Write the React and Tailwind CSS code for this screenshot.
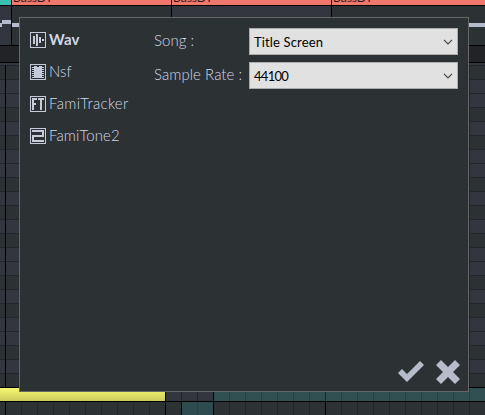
import React from "react";

// Piano-roll rows from top to bottom: L = white key, D = black key.
const ROWS = "DLLDLDLLDLDLDLLDLDLLDLD".split("");

const FORMATS = [
  { name: "Wav", selected: true, spacing: "tracking-[0.1px]" },
  { name: "Nsf", spacing: "tracking-normal" },
  { name: "FamiTracker", spacing: "tracking-[0.32px]" },
  { name: "FamiTone2", spacing: "tracking-[0.1px]" },
];

const FIELDS = [
  { label: "Song :", value: "Title Screen", spacing: "tracking-[0.15px]" },
  { label: "Sample Rate :", value: "44100", spacing: "tracking-[-0.7px]" },
];

function FormatIcon({ name }) {
  return (
    <svg width="16" height="16" viewBox="0 0 16 16" fill="#c6cbdb" shapeRendering="crispEdges" className="shrink-0">
      <path fillRule="evenodd" d="M0 0H16V16H0ZM1 1V15H15V1Z" />
      {name === "Wav" && <path d="M3 4h2v8h-2ZM6 2h2v12h-2ZM9 5h2v6h-2ZM12 7h2v2h-2Z" />}
      {name === "Nsf" && (
        <path d="M4 2H7V3H9V2H12V14H4ZM2 3h2v1h-2ZM2 5h2v1h-2ZM2 7h2v1h-2ZM2 9h2v1h-2ZM2 11h2v1h-2ZM2 13h2v1h-2ZM12 3h2v1h-2ZM12 5h2v1h-2ZM12 7h2v1h-2ZM12 9h2v1h-2ZM12 11h2v1h-2ZM12 13h2v1h-2Z" />
      )}
      {name === "FamiTracker" && <path d="M2 2H7V4H4V7H6V9H4V14H2ZM8 2H14V4H12V14H10V4H8Z" />}
      {name === "FamiTone2" && <path d="M2 2H14V9H4V12H14V14H2V7H12V4H2Z" />}
    </svg>
  );
}

function Select({ value, spacing }) {
  return (
    <div className={`flex h-[27px] w-[209px] items-center justify-between border border-[#acacac] bg-[#e1e1e1] pl-1 pr-1 pt-[2px] text-[13px] text-black ${spacing}`}>
      <span>{value}</span>
      <svg width="10" height="6" viewBox="0 0 10 6" fill="none" stroke="#444" strokeWidth="1.2" className="mb-[2px]">
        <path d="M1 0.8L5 4.8L9 0.8" />
      </svg>
    </div>
  );
}

function Header() {
  return (
    <div className="flex h-[6px] overflow-hidden border-b border-black text-[12px] leading-[12px] text-[#301a1a]">
      <div className="w-[11px] bg-[#38c0b2]" />
      {["w-[160px]", "w-[160px]", "w-[154px]"].map((w, i) => (
        <div key={i} className={`${w} shrink-0 border-l border-black bg-[#ef776c] pl-px`}>
          <span className="-mt-[8px] block">BassDT</span>
        </div>
      ))}
    </div>
  );
}

function Envelope() {
  return (
    <div className="flex h-10 border-b border-black">
      <div className="flex w-[11px] bg-[#33363f]">
        <div className="mt-[17px] h-1 w-[2px] bg-[#b4bccc]" />
        <div className="mt-[14px] h-1 w-[9px] bg-[#b4bccc]" />
      </div>
      <div className="w-[160px] border-l border-black bg-[#2c3134] pt-[17px]">
        <div className="h-1 bg-[#b4bccc]" />
      </div>
      <div className="w-[160px] border-l border-black bg-[#33363f]" />
      <div className="flex-1 border-l border-black bg-[#2c3134] pt-[17px]">
        <div className="h-1 bg-[#b4bccc]" />
      </div>
    </div>
  );
}

function Cells({ count, tone, line }) {
  return Array.from({ length: count }, (_, i) => (
    <div key={i} className={`w-4 shrink-0 border-l ${line} ${tone}`} />
  ));
}

export default function App() {
  return (
    <div className="relative h-[415px] w-[485px] overflow-hidden bg-[#2c3134] font-['Lato','Liberation_Sans',sans-serif]">
      <Header />
      <Envelope />
      <div className="h-[17px] border-b border-black bg-[#212326]" />
      <div className="h-[2px] bg-[#33363f]" />
      {ROWS.map((row, i) => (
        <div key={i} className={`flex h-[14px] justify-between border-t border-[#222529] ${row === "L" ? "bg-[#33363f]" : "bg-[#2c3134]"}`}>
          <div className="-mt-px ml-[5px] h-[14px] w-px bg-black" />
          <div className="-mt-px mr-[15px] h-[14px] w-px bg-[#222529]" />
        </div>
      ))}
      <div className="flex h-[15px] border-y border-black">
        <div className="w-[165px] shrink-0 bg-linear-to-b from-[#f8f873] to-[#cbcb5d]" />
        <Cells count={1} tone="bg-[#33363f]" line="border-black" />
        <Cells count={2} tone="bg-[#33363f]" line="border-[#222529]" />
        <Cells count={1} tone="bg-[#305052]" line="border-black" />
        <Cells count={6} tone="bg-[#305052]" line="border-[#254346]" />
        <Cells count={1} tone="bg-[#305052]" line="border-[#102b2d]" />
        <Cells count={9} tone="bg-[#305052]" line="border-[#254346]" />
      </div>
      <div className="flex h-[13px]">
        <div className="w-[5px] shrink-0 bg-[#2c3134]" />
        <Cells count={1} tone="bg-[#2c3134]" line="border-black" />
        <Cells count={9} tone="bg-[#2c3134]" line="border-[#222529]" />
        <Cells count={1} tone="bg-[#2c3134]" line="border-black" />
        <Cells count={1} tone="bg-[#2e4c4f]" line="border-black" />
        <Cells count={1} tone="bg-[#2e4c4f]" line="border-[#254346]" />
        <Cells count={1} tone="bg-[#2c3134]" line="border-black" />
        <Cells count={6} tone="bg-[#2c3134]" line="border-[#222529]" />
        <Cells count={1} tone="bg-[#2c3134]" line="border-black" />
        <Cells count={9} tone="bg-[#2c3134]" line="border-[#222529]" />
      </div>

      <div className="absolute left-[19px] top-[17px] flex h-[375px] w-[450px] flex-col justify-between border border-[#666666] bg-[#2c3134] text-[#d0d7e8]">
        <div className="flex">
          <div className="flex w-[134px] flex-col gap-4 pl-[10px] pt-[14px]">
            {FORMATS.map((f) => (
              <div key={f.name} className={`flex h-4 items-center gap-[3px] whitespace-nowrap text-[15px] ${f.spacing} ${f.selected ? "font-bold" : "font-light"}`}>
                <FormatIcon name={f.name} />
                <span className="pb-[2px]">{f.name}</span>
              </div>
            ))}
          </div>
          <div className="flex flex-col gap-[7px] pt-[10px]">
            {FIELDS.map(({ label, value, spacing }) => (
              <div key={label} className="flex h-[27px] items-center">
                <span className="w-[95px] whitespace-nowrap pb-[3px] text-[15px] font-light tracking-[0.05px]">{label}</span>
                <Select value={value} spacing={spacing} />
              </div>
            ))}
          </div>
        </div>
        <div className="flex items-center justify-end gap-3 pb-[7px] pr-2">
          <svg width="26" height="22" viewBox="0 0 26 22" fill="#b7bccb">
            <path d="M0 12L4 8L9 13L22 0L26 4L9 21Z" />
          </svg>
          <svg width="24" height="24" viewBox="0 0 24 24" fill="#b7bccb">
            <path d="M5 0L12 7L19 0L24 5L17 12L24 19L19 24L12 17L5 24L0 19L7 12L0 5Z" />
          </svg>
        </div>
      </div>
    </div>
  );
}
